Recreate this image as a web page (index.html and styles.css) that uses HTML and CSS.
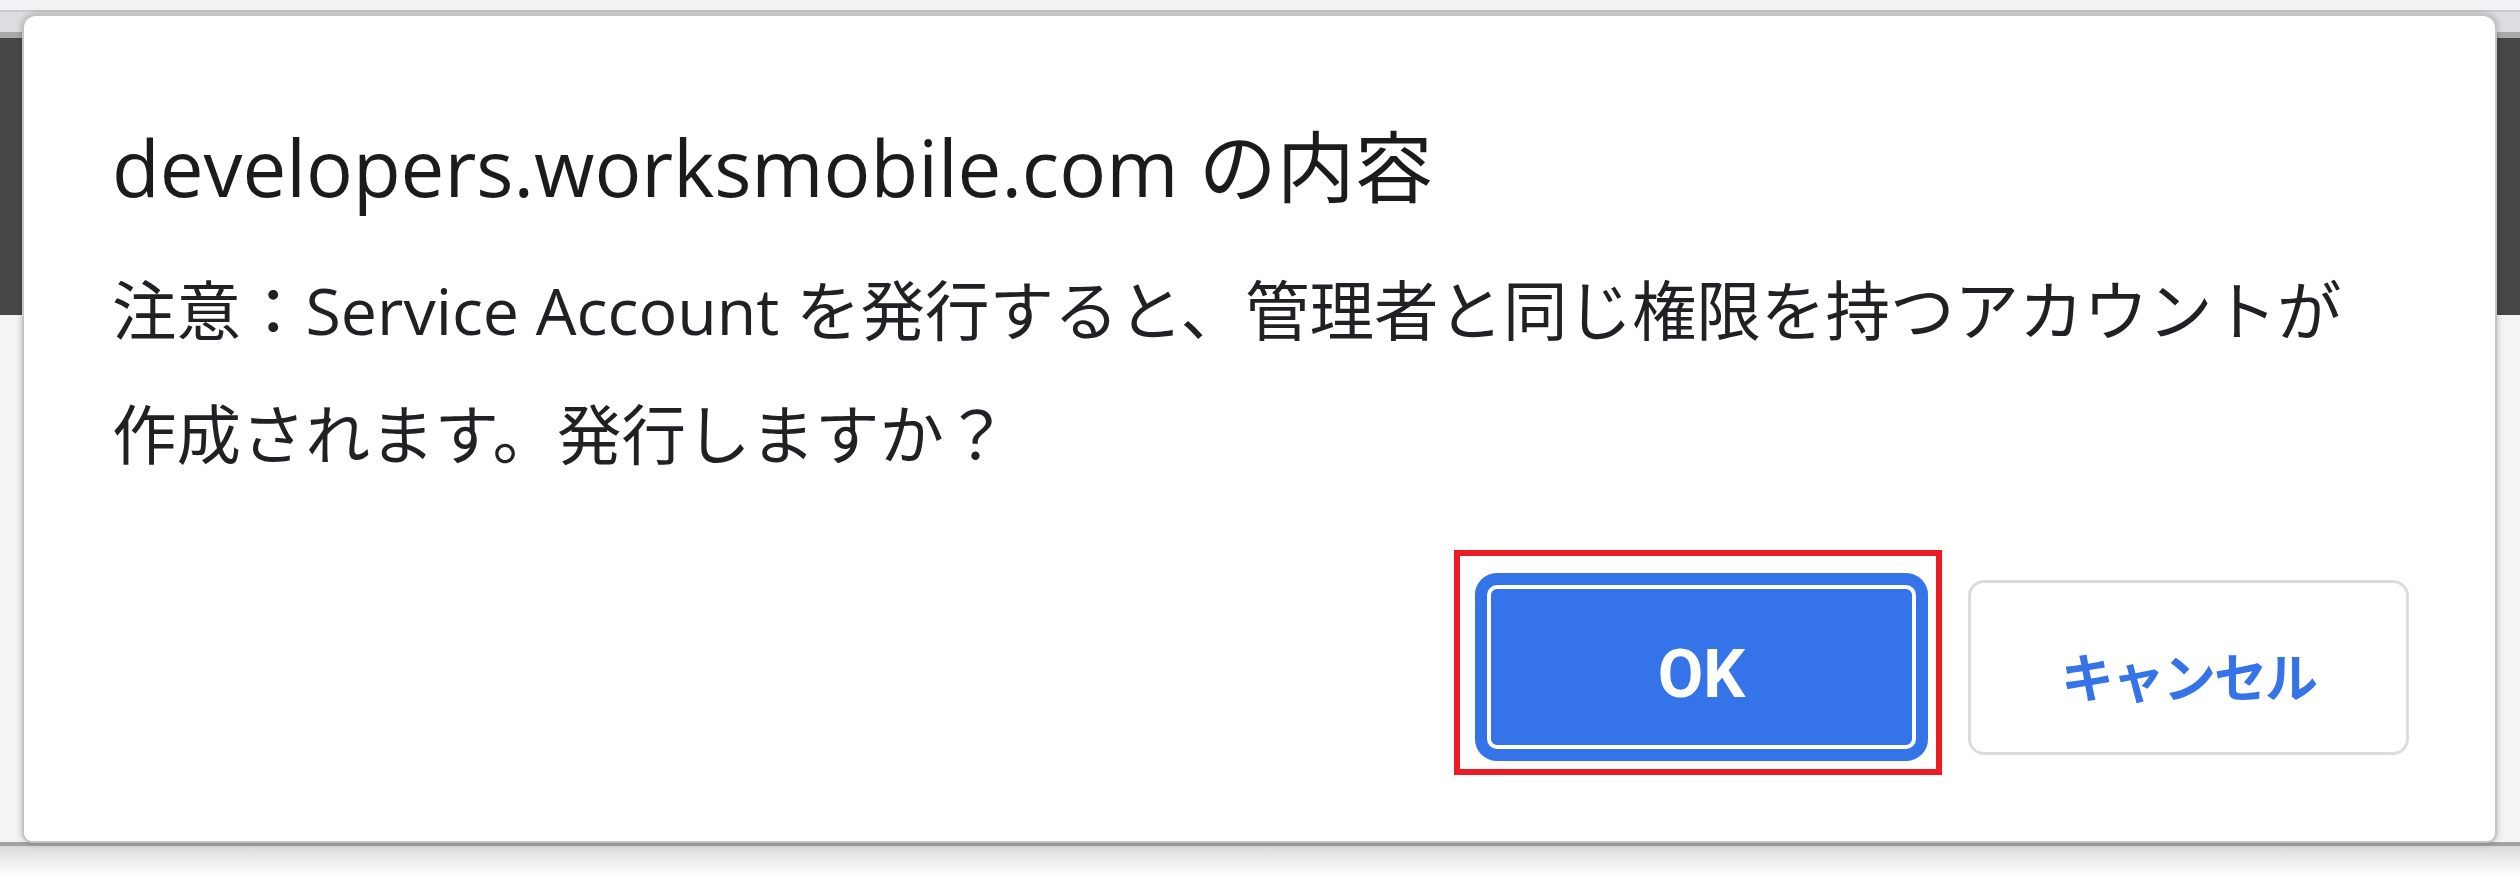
FILE: index.html
```html
<!DOCTYPE html>
<html lang="ja">
<head>
    <meta charset="utf-8">
    <title>developers.worksmobile.com の内容</title>
    <link rel="stylesheet" href="styles.css">
</head>
<body>
    <div class="backdrop">
        <div class="bar-top"></div>
        <div class="bar-line"></div>
        <div class="bar-tabs"></div>
        <div class="bar-edge"></div>
        <div class="page-dark"></div>
        <div class="page-light"></div>
        <div class="page-rule"></div>
        <div class="page-shadow"></div>
    </div>

    <div class="dialog" role="alertdialog">
        <h1 class="dialog-title">developers.worksmobile.com の内容</h1>
        <p class="dialog-message">注意：Service Account を発行すると、管理者と同じ権限を持つアカウントが<br>作成されます。発行しますか？</p>
        <div class="dialog-actions">
            <div class="highlight">
                <button class="btn btn-ok">OK</button>
            </div>
            <button class="btn btn-cancel">キャンセル</button>
        </div>
    </div>
</body>
</html>
```

FILE: styles.css
```css
* {
    box-sizing: border-box;
    margin: 0;
    padding: 0;
}

body {
    width: 2520px;
    height: 875px;
    overflow: hidden;
    position: relative;
    background: #ffffff;
    font-family: 'Open Sans', 'Noto Sans CJK JP', sans-serif;
    color: #202124;
}

/* browser window behind the alert */
.backdrop {
    display: flex;
    flex-direction: column;
    height: 100%;
}

.bar-top {
    height: 10px;
    background: #f1f3f4;
}

.bar-line {
    height: 2px;
    background: #c9cacd;
}

.bar-tabs {
    height: 20px;
    background: #dcdde0;
}

.bar-edge {
    height: 6px;
    background: #a9aaac;
}

.page-dark {
    height: 277px;
    background: #474747;
}

.page-light {
    height: 527px;
    background: #f4f4f4;
}

.page-rule {
    height: 4px;
    background: #a3a3a3;
}

.page-shadow {
    flex: 1;
    background: linear-gradient(#d9d9d9, #ffffff);
}

/* the alert itself */
.dialog {
    position: absolute;
    left: 22px;
    top: 14px;
    width: 2475px;
    height: 829px;
    background: #ffffff;
    border: 2px solid #c4c4c4;
    border-radius: 14px 14px 10px 10px;
    box-shadow: 0 0 6px rgba(0, 0, 0, 0.25);
    padding: 101px 86px 0 88px;
}

.dialog-title {
    font-size: 78px;
    line-height: 100px;
    font-weight: 400;
    color: #1b1b1b;
}

.dialog-message {
    margin-top: 31px;
    font-size: 64.5px;
    line-height: 124px;
    white-space: nowrap;
}

.dialog-actions {
    display: flex;
    justify-content: flex-end;
    align-items: flex-start;
    margin-top: 54px;
}

.highlight {
    border: 6px solid #ed1c24;
    padding: 17px 8px 8px 15px;
}

.btn {
    display: flex;
    justify-content: center;
    align-items: center;
    border: none;
    cursor: pointer;
    padding-top: 14px;
}

.btn-ok {
    width: 453px;
    height: 188px;
    border-radius: 22px;
    background: #3574e8;
    box-shadow: inset 0 0 0 12px #3574e8, inset 0 0 0 16px #ffffff;
    color: #ffffff;
    font-family: Roboto, 'Noto Sans CJK JP', sans-serif;
    font-weight: 700;
    font-size: 66px;
}

.btn-cancel {
    width: 441px;
    height: 175px;
    margin-left: 26px;
    margin-top: 30px;
    border: 3px solid #dadce0;
    border-radius: 16px;
    background: #ffffff;
    color: #3574e8;
    font-family: 'Noto Sans CJK JP', sans-serif;
    font-weight: 700;
    font-size: 53px;
    letter-spacing: -2px;
}
```
